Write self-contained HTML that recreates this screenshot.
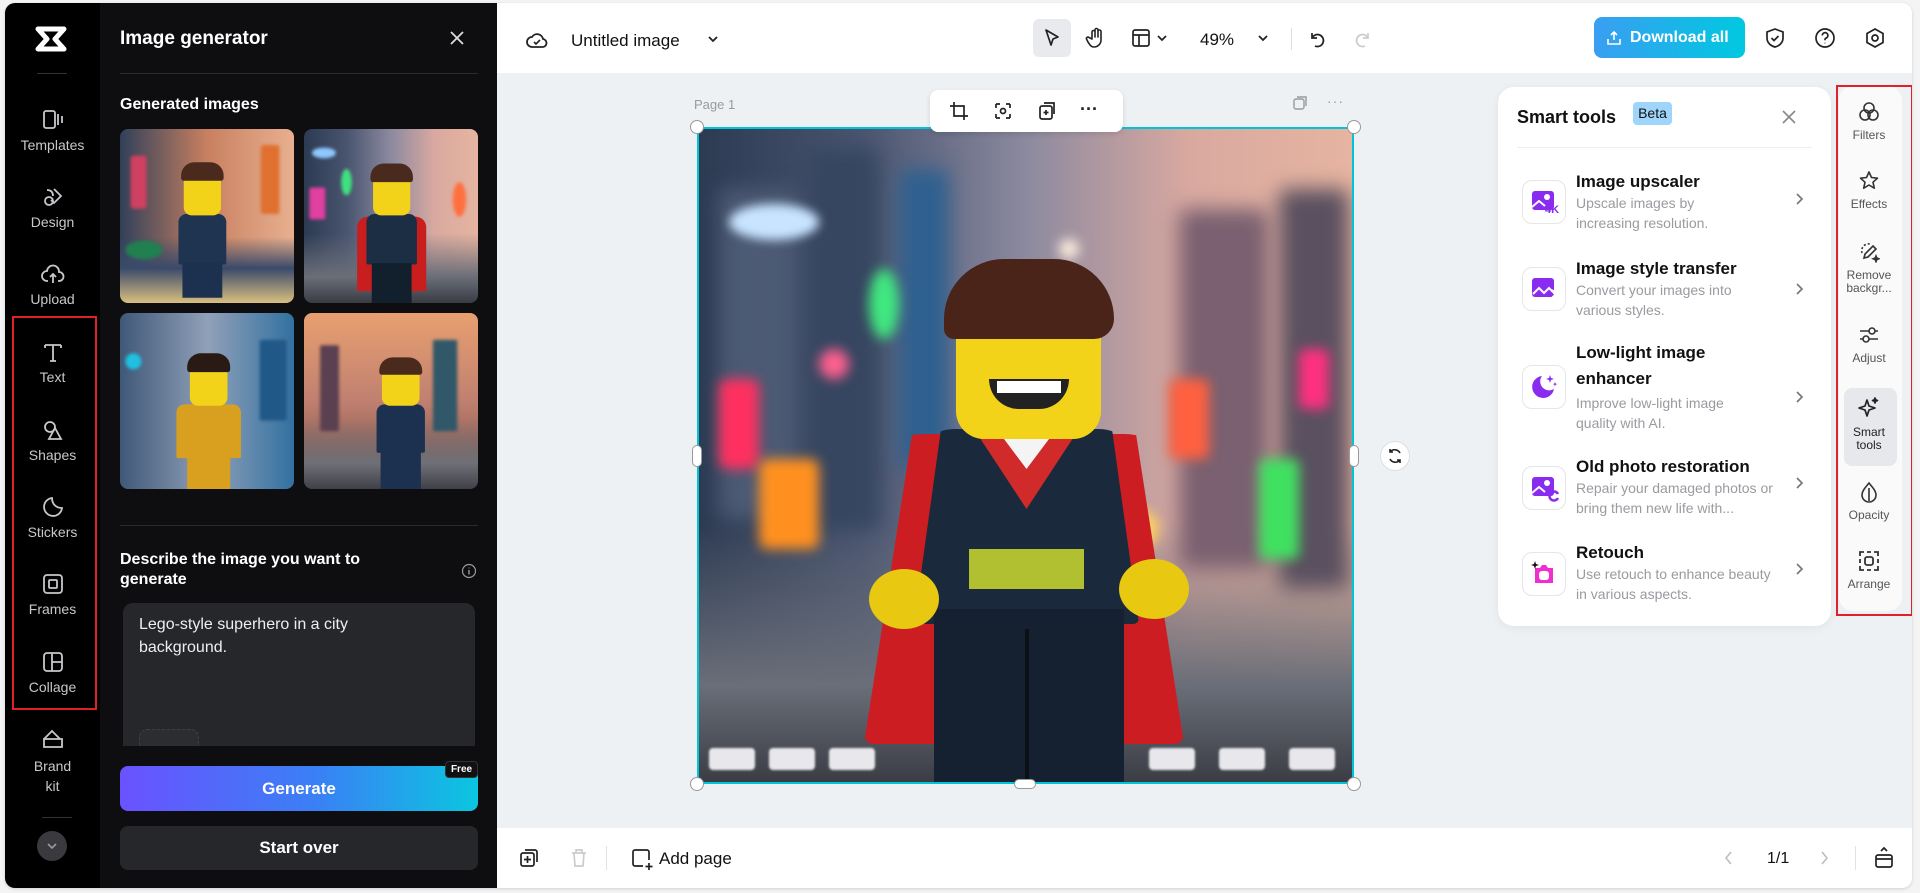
<!DOCTYPE html>
<html><head><meta charset="utf-8">
<style>
*{box-sizing:border-box;margin:0;padding:0}
body{width:1920px;height:893px;overflow:hidden;background:#f4f4f5;font-family:"Liberation Sans",sans-serif;position:relative}
.app{position:absolute;left:5px;top:3px;width:1907px;height:885px;background:#fff;border-radius:10px;overflow:hidden;box-shadow:0 1px 3px rgba(0,0,0,.15)}
.abs{position:absolute}
.nav{position:absolute;left:0;top:0;width:95px;height:885px;background:#000}
.nv{position:absolute;left:0;width:95px;text-align:center;color:#c8c8cc;font-size:14px}
.nv svg{display:block;margin:0 auto 6px}
.panel{position:absolute;left:95px;top:0;width:397px;height:885px;background:#0e0e10;color:#fff}
.canvas{position:absolute;left:492px;top:70px;width:1415px;height:755px;background:#eef1f4}
.scene{position:absolute;left:0;top:0;width:655px;height:655px;overflow:hidden;transform-origin:0 0;
background:linear-gradient(180deg,rgba(0,0,0,0) 60%,#6a6e78 85%,#3a3c44 100%),linear-gradient(90deg,#2c3a52 0%,#4a5570 25%,#8c8aa0 50%,#d9a9a0 75%,#e6b4a0 100%)}
.b{position:absolute;border-radius:50%;filter:blur(6px)}
.fig{position:absolute;left:0;top:0;width:655px;height:655px}
.stud{position:absolute;bottom:14px;width:46px;height:22px;background:#e8e8ec;border-radius:4px;filter:blur(1px)}
.item{position:absolute;left:24px;width:300px}
.item .ib{position:absolute;left:0;width:44px;height:44px;border:1px solid #e6e6e8;border-radius:10px;background:#fff}
.item .t{position:absolute;left:54px;font-size:17px;font-weight:bold;color:#111;line-height:23px;width:220px}
.item .d{position:absolute;left:54px;font-size:14px;color:#9a9aa0;line-height:20px;width:205px}
.item .c{position:absolute;left:272px}
.rt{position:absolute;left:0;width:60px;text-align:center;font-size:12px;color:#555;line-height:13px}
.rt svg{display:block;margin:0 auto 6px}
</style></head><body>
<div class="app">
<div class="nav">
 <svg class="abs" style="left:30px;top:22px" width="34" height="28" viewBox="0 0 34 28"><path d="M3 4h26l-9 10 9 10H3l9-10z" fill="none" stroke="#fff" stroke-width="5" stroke-linejoin="round"/></svg>
 <div class="abs" style="left:32px;top:70px;width:30px;height:1px;background:#333"></div>
 <div class="nv" style="top:106px"><svg width="22" height="22" viewBox="0 0 22 22" fill="none" stroke="#c8c8cc" stroke-width="1.8"><rect x="2" y="2" width="11" height="17" rx="2"/><path d="M16 5v11M20 7v7"/></svg>Templates</div>
 <div class="nv" style="top:183px"><svg width="22" height="22" viewBox="0 0 22 22" fill="none" stroke="#c8c8cc" stroke-width="1.8"><circle cx="7" cy="15" r="4"/><path d="M12 3l7 7-7 7-3-3M5 4c4 0 6 2 6 6"/></svg>Design</div>
 <div class="nv" style="top:260px"><svg width="24" height="22" viewBox="0 0 24 22" fill="none" stroke="#c8c8cc" stroke-width="1.8"><path d="M7 18H6a5 5 0 0 1 0-10 6 6 0 0 1 12 1 4 4 0 0 1 0 9h-1M12 20v-9M9 14l3-3 3 3"/></svg>Upload</div>
 <div class="nv" style="top:338px"><svg width="22" height="22" viewBox="0 0 22 22" fill="none" stroke="#c8c8cc" stroke-width="1.8"><path d="M3 4h16M11 4v16M3 4v3M19 4v3M8 20h6"/></svg>Text</div>
 <div class="nv" style="top:416px"><svg width="22" height="22" viewBox="0 0 22 22" fill="none" stroke="#c8c8cc" stroke-width="1.8"><circle cx="8" cy="8" r="5"/><path d="M13 9l6 11H7z"/></svg>Shapes</div>
 <div class="nv" style="top:493px"><svg width="22" height="22" viewBox="0 0 22 22" fill="none" stroke="#c8c8cc" stroke-width="1.8"><path d="M20 12A9 9 0 1 1 10 2c0 6 4 10 10 10z"/></svg>Stickers</div>
 <div class="nv" style="top:570px"><svg width="22" height="22" viewBox="0 0 22 22" fill="none" stroke="#c8c8cc" stroke-width="1.8"><rect x="2" y="2" width="18" height="18" rx="3"/><rect x="7" y="7" width="8" height="8" rx="1"/></svg>Frames</div>
 <div class="nv" style="top:648px"><svg width="22" height="22" viewBox="0 0 22 22" fill="none" stroke="#c8c8cc" stroke-width="1.8"><rect x="2" y="2" width="18" height="18" rx="3"/><path d="M10 2v18M10 11h10"/></svg>Collage</div>
 <div class="nv" style="top:725px;line-height:20px"><svg width="24" height="22" viewBox="0 0 24 22" fill="none" stroke="#c8c8cc" stroke-width="1.8"><path d="M3 11h18v8H3zM3 11l8-8 8 8"/></svg>Brand<br>kit</div>
 <div class="abs" style="left:37px;top:814px;width:30px;height:1px;background:#333"></div>
 <div class="abs" style="left:32px;top:828px;width:30px;height:30px;border-radius:50%;background:#3a3a3e"><svg width="30" height="30" viewBox="0 0 30 30"><path d="M11 13l4 4 4-4" fill="none" stroke="#999" stroke-width="1.6"/></svg></div>
 <div class="abs" style="left:7px;top:313px;width:85px;height:394px;border:2px solid #e0202a"></div>
</div>
<div class="panel">
 <div class="abs" style="left:20px;top:25px;font-size:19px;font-weight:bold">Image generator</div>
 <svg class="abs" style="left:349px;top:27px" width="16" height="16" viewBox="0 0 16 16"><path d="M2 2l12 12M14 2L2 14" stroke="#ddd" stroke-width="1.8"/></svg>
 <div class="abs" style="left:20px;top:70px;width:358px;height:1px;background:#2a2a2e"></div>
 <div class="abs" style="left:20px;top:93px;font-size:16px;font-weight:bold">Generated images</div>
 <div class="abs" style="left:20px;top:126px;width:174px;height:174px;border-radius:8px;overflow:hidden"><div class="scene" style="transform:scale(.2657);background:linear-gradient(180deg,rgba(0,0,0,0) 62%,#3a4a6a 80%,#d9c080 100%),linear-gradient(90deg,#30405a,#c88060 50%,#e8b090)">
  <div class="b" style="left:40px;top:100px;width:60px;height:200px;background:#d04060;border-radius:10px"></div><div class="b" style="left:530px;top:60px;width:70px;height:260px;background:#e07030;border-radius:10px"></div><div class="b" style="left:20px;top:420px;width:140px;height:70px;background:#208050"></div>
  <div class="fig" style="left:-20px"><div class="abs" style="left:240px;top:320px;width:180px;height:190px;background:#1e3450;border-radius:30px 30px 6px 6px"></div><div class="abs" style="left:260px;top:150px;width:140px;height:175px;background:#f2d31a;border-radius:30px"></div><div class="abs" style="left:250px;top:125px;width:160px;height:70px;background:#4a2a1c;border-radius:50px 50px 10px 10px"></div><div class="abs" style="left:255px;top:505px;width:150px;height:130px;background:#1c3050"></div></div>
 </div></div>
 <div class="abs" style="left:204px;top:126px;width:174px;height:174px;border-radius:8px;overflow:hidden"><div class="scene" style="transform:scale(.2657)">
  <div class="b" style="left:30px;top:70px;width:90px;height:40px;background:#8ec8ff"></div><div class="b" style="left:20px;top:220px;width:60px;height:120px;background:#e040a0;border-radius:8px"></div><div class="b" style="left:140px;top:150px;width:40px;height:100px;background:#40e080"></div><div class="b" style="left:560px;top:200px;width:50px;height:130px;background:#ff7040"></div>
  <div class="fig"><div class="abs" style="left:200px;top:330px;width:260px;height:280px;background:#c81e1e;border-radius:40px 40px 0 0"></div><div class="abs" style="left:235px;top:320px;width:190px;height:190px;background:#1c2e44;border-radius:30px 30px 6px 6px"></div><div class="abs" style="left:260px;top:160px;width:140px;height:165px;background:#f2d31a;border-radius:30px"></div><div class="abs" style="left:250px;top:130px;width:160px;height:70px;background:#4a2a1c;border-radius:50px 50px 10px 10px"></div><div class="abs" style="left:255px;top:505px;width:150px;height:150px;background:#12202e"></div></div>
 </div></div>
 <div class="abs" style="left:20px;top:310px;width:174px;height:176px;border-radius:8px;overflow:hidden"><div class="scene" style="transform:scale(.2687);background:linear-gradient(90deg,#405878,#90a0b8 50%,#3070a0)">
  <div class="b" style="left:20px;top:150px;width:60px;height:60px;background:#20c0e0"></div><div class="b" style="left:520px;top:100px;width:100px;height:300px;background:#205888;border-radius:6px"></div>
  <div class="fig"><div class="abs" style="left:210px;top:340px;width:240px;height:200px;background:#d9a020;border-radius:30px 30px 6px 6px"></div><div class="abs" style="left:260px;top:180px;width:140px;height:165px;background:#f2d31a;border-radius:30px"></div><div class="abs" style="left:250px;top:150px;width:160px;height:70px;background:#2a1a14;border-radius:50px 50px 10px 10px"></div><div class="abs" style="left:250px;top:535px;width:160px;height:120px;background:#d9a020"></div></div>
 </div></div>
 <div class="abs" style="left:204px;top:310px;width:174px;height:176px;border-radius:8px;overflow:hidden"><div class="scene" style="transform:scale(.2687);background:linear-gradient(180deg,rgba(0,0,0,0) 60%,#707078 85%,#404048 100%),linear-gradient(180deg,#e8a070,#c08070 50%,#704840)">
  <div class="b" style="left:60px;top:120px;width:70px;height:320px;background:#5a4050;border-radius:6px"></div><div class="b" style="left:480px;top:100px;width:90px;height:340px;background:#305868;border-radius:6px"></div>
  <div class="fig" style="left:30px"><div class="abs" style="left:240px;top:340px;width:180px;height:180px;background:#1c3050;border-radius:30px 30px 6px 6px"></div><div class="abs" style="left:260px;top:190px;width:140px;height:155px;background:#f2d31a;border-radius:30px"></div><div class="abs" style="left:250px;top:165px;width:160px;height:65px;background:#4a2a1c;border-radius:50px 50px 10px 10px"></div><div class="abs" style="left:255px;top:515px;width:150px;height:140px;background:#1c3050"></div></div>
 </div></div>
 <div class="abs" style="left:20px;top:522px;width:358px;height:1px;background:#2a2a2e"></div>
 <div class="abs" style="left:20px;top:547px;font-size:16px;font-weight:bold;line-height:20px;width:300px">Describe the image you want to generate</div>
 <svg class="abs" style="left:361px;top:560px" width="16" height="16" viewBox="0 0 16 16"><circle cx="8" cy="8" r="6.5" fill="none" stroke="#999" stroke-width="1.2"/><path d="M8 7v4.5M8 4.6v.8" stroke="#999" stroke-width="1.4"/></svg>
 <div class="abs" style="left:23px;top:600px;width:352px;height:143px;background:#26272b;border-radius:10px 10px 0 0"></div>
 <div class="abs" style="left:39px;top:610px;font-size:16px;color:#eee;line-height:23px;width:300px">Lego-style superhero in a city background.</div>
 <div class="abs" style="left:39px;top:726px;width:60px;height:17px;border:1px dashed #3e3f44;border-bottom:none;border-radius:8px 8px 0 0;background:#2c2d31"></div>
 <div class="abs" style="left:20px;top:763px;width:358px;height:45px;border-radius:8px;background:linear-gradient(90deg,#6a52ff,#3a80f5 55%,#0bc6e0);font-size:17px;font-weight:bold;text-align:center;line-height:45px">Generate</div>
 <div class="abs" style="left:345px;top:758px;width:33px;height:17px;background:#111;border:1px solid #333;border-radius:4px;font-size:10px;font-weight:bold;text-align:center;line-height:15px">Free</div>
 <div class="abs" style="left:20px;top:823px;width:358px;height:44px;border-radius:8px;background:#26272b;font-size:17px;font-weight:bold;text-align:center;line-height:44px">Start over</div>
</div>
<div class="abs" style="left:492px;top:415px;width:10px;height:62px;background:#2a2a2e;border-radius:0 6px 6px 0"></div>
<svg class="abs" style="left:520px;top:27px" width="24" height="22" viewBox="0 0 24 22"><path d="M7 17a5 5 0 0 1 0-10 6 6 0 0 1 11 2 4 4 0 0 1-1 8z" fill="none" stroke="#222" stroke-width="1.8"/><path d="M9 12l2 2 4-4" fill="none" stroke="#222" stroke-width="1.6"/></svg>
<div class="abs" style="left:566px;top:28px;font-size:17px;color:#111">Untitled image</div>
<svg class="abs" style="left:701px;top:29px" width="14" height="14" viewBox="0 0 14 14"><path d="M3 5l4 4 4-4" fill="none" stroke="#222" stroke-width="1.8"/></svg>
<div class="abs" style="left:1028px;top:16px;width:38px;height:38px;border-radius:6px;background:#e8eaee"></div>
<svg class="abs" style="left:1037px;top:25px" width="20" height="20" viewBox="0 0 20 20"><path d="M4 2l12 7-5 2-2 6z" fill="none" stroke="#222" stroke-width="1.7" stroke-linejoin="round"/></svg>
<svg class="abs" style="left:1080px;top:24px" width="22" height="22" viewBox="0 0 22 22"><path d="M7 12V5a1.5 1.5 0 0 1 3 0v5V3a1.5 1.5 0 0 1 3 0v7V4.5a1.5 1.5 0 0 1 3 0V13a7 7 0 0 1-7 7c-3 0-4-2-6-5l-1.5-3a1.5 1.5 0 0 1 2.5-1.5z" fill="none" stroke="#222" stroke-width="1.6" stroke-linejoin="round"/></svg>
<svg class="abs" style="left:1126px;top:25px" width="40" height="20" viewBox="0 0 40 20"><rect x="2" y="2" width="16" height="16" rx="2" fill="none" stroke="#222" stroke-width="1.7"/><path d="M2 7h16M8 7v11M27 8l4 4 4-4" fill="none" stroke="#222" stroke-width="1.7"/></svg>
<div class="abs" style="left:1195px;top:27px;font-size:17px;color:#111">49%</div>
<svg class="abs" style="left:1251px;top:28px" width="14" height="14" viewBox="0 0 14 14"><path d="M3 5l4 4 4-4" fill="none" stroke="#222" stroke-width="1.8"/></svg>
<div class="abs" style="left:1286px;top:25px;width:1px;height:22px;background:#ddd"></div>
<svg class="abs" style="left:1302px;top:26px" width="20" height="20" viewBox="0 0 20 20"><path d="M5 4v5h5M5 9a6 6 0 1 1 3 8" fill="none" stroke="#222" stroke-width="1.7"/></svg>
<svg class="abs" style="left:1348px;top:26px" width="20" height="20" viewBox="0 0 20 20"><path d="M15 4v5h-5M15 9a6 6 0 1 0-3 8" fill="none" stroke="#ccc" stroke-width="1.7"/></svg>
<div class="abs" style="left:1589px;top:14px;width:151px;height:41px;border-radius:8px;background:linear-gradient(90deg,#3a9ef2,#00c8e0);color:#fff;font-size:16px;font-weight:bold;line-height:41px;padding-left:36px">Download all</div>
<svg class="abs" style="left:1601px;top:27px" width="16" height="16" viewBox="0 0 16 16"><path d="M8 10V2M5 5l3-3 3 3M2 9v5h12V9" fill="none" stroke="#fff" stroke-width="1.6"/></svg>
<svg class="abs" style="left:1759px;top:24px" width="22" height="22" viewBox="0 0 22 22"><path d="M11 2l8 3v6c0 5-4 8-8 9-4-1-8-4-8-9V5z" fill="none" stroke="#222" stroke-width="1.7"/><path d="M7.5 11l2.5 2.5 4.5-4.5" fill="none" stroke="#222" stroke-width="1.7"/></svg>
<svg class="abs" style="left:1809px;top:24px" width="22" height="22" viewBox="0 0 22 22"><circle cx="11" cy="11" r="9" fill="none" stroke="#222" stroke-width="1.7"/><path d="M8.3 8.5a2.8 2.8 0 1 1 3.7 2.6c-.7.3-1 .8-1 1.5v.6M11 15.8v.4" fill="none" stroke="#222" stroke-width="1.7"/></svg>
<svg class="abs" style="left:1859px;top:24px" width="22" height="22" viewBox="0 0 22 22"><path d="M11 2l8 4.5v9L11 20l-8-4.5v-9z" fill="none" stroke="#222" stroke-width="1.7"/><circle cx="11" cy="11" r="3" fill="none" stroke="#222" stroke-width="1.7"/></svg>
<div class="canvas">
 <div class="abs" style="left:197px;top:24px;font-size:13px;color:#999">Page 1</div>
 <svg class="abs" style="left:795px;top:22px" width="16" height="16" viewBox="0 0 16 16"><rect x="2" y="4" width="10" height="10" rx="2" fill="none" stroke="#999" stroke-width="1.4"/><path d="M5 2h9v9" fill="none" stroke="#999" stroke-width="1.4"/></svg>
 <div class="abs" style="left:830px;top:20px;font-size:14px;color:#999;letter-spacing:1px">···</div>
 <div class="abs" style="left:200px;top:54px;width:657px;height:657px;border:2px solid #00c4d8"></div>
 <div class="abs" style="left:202px;top:56px;width:653px;height:653px;overflow:hidden">
  <div class="scene">
   <div class="b" style="left:20px;top:60px;width:80px;height:330px;background:#4c5a74;border-radius:8px;filter:blur(10px)"></div>
   <div class="b" style="left:110px;top:20px;width:70px;height:380px;background:#364660;border-radius:8px;filter:blur(10px)"></div>
   <div class="b" style="left:200px;top:40px;width:50px;height:300px;background:#2e6090;border-radius:8px;filter:blur(10px)"></div>
   <div class="b" style="left:30px;top:75px;width:90px;height:36px;background:#c8e4ff;filter:blur(5px)"></div>
   <div class="b" style="left:20px;top:250px;width:40px;height:90px;background:#ff3060;border-radius:8px"></div>
   <div class="b" style="left:60px;top:330px;width:60px;height:90px;background:#ff9020;border-radius:8px"></div>
   <div class="b" style="left:170px;top:140px;width:30px;height:70px;background:#40e880"></div>
   <div class="b" style="left:120px;top:220px;width:30px;height:30px;background:#ff6090"></div>
   <div class="b" style="left:480px;top:80px;width:90px;height:360px;background:#7a6070;border-radius:8px;filter:blur(10px)"></div>
   <div class="b" style="left:580px;top:60px;width:70px;height:400px;background:#5a5060;border-radius:8px;filter:blur(10px)"></div>
   <div class="b" style="left:470px;top:250px;width:40px;height:80px;background:#ff6040;border-radius:6px"></div>
   <div class="b" style="left:560px;top:330px;width:40px;height:100px;background:#40e060;border-radius:6px"></div>
   <div class="b" style="left:600px;top:220px;width:30px;height:60px;background:#ff3080;border-radius:6px"></div>
   <div class="b" style="left:420px;top:380px;width:40px;height:40px;background:#ffd060"></div>
   <div class="b" style="left:360px;top:110px;width:20px;height:20px;background:#fff0e0"></div>
   <div class="stud" style="left:10px"></div><div class="stud" style="left:70px"></div><div class="stud" style="left:130px"></div><div class="stud" style="left:450px"></div><div class="stud" style="left:520px"></div><div class="stud" style="left:590px"></div>
   <div class="fig">
    <div class="abs" style="left:165px;top:305px;width:320px;height:310px;background:#cc1e22;border-radius:60px 60px 10px 10px;clip-path:polygon(15% 0,85% 0,100% 100%,70% 100%,30% 100%,0 100%)"></div>
    <div class="abs" style="left:215px;top:300px;width:225px;height:195px;background:#1a2a3c;border-radius:40px 40px 6px 6px;clip-path:polygon(12% 0,88% 0,100% 100%,0 100%)"></div>
    <div class="abs" style="left:275px;top:300px;width:105px;height:80px;background:#d02a2a;clip-path:polygon(0 0,100% 0,50% 100%)"></div>
    <div class="abs" style="left:305px;top:310px;width:45px;height:30px;background:#f4f4f4;clip-path:polygon(0 0,100% 0,50% 100%)"></div>
    <div class="abs" style="left:270px;top:420px;width:115px;height:40px;background:#b0c030"></div>
    <div class="abs" style="left:235px;top:480px;width:190px;height:175px;background:#152030"></div>
    <div class="abs" style="left:326px;top:500px;width:4px;height:155px;background:#0a1018"></div>
    <div class="abs" style="left:170px;top:440px;width:70px;height:60px;background:#e8c810;border-radius:50%"></div>
    <div class="abs" style="left:420px;top:430px;width:70px;height:60px;background:#e8c810;border-radius:50%"></div>
    <div class="abs" style="left:257px;top:165px;width:145px;height:145px;background:#f2d31a;border-radius:28px"></div>
    <div class="abs" style="left:245px;top:130px;width:170px;height:80px;background:#4a2418;border-radius:60px 60px 20px 10px"></div>
    <div class="abs" style="left:290px;top:250px;width:80px;height:30px;background:#222;border-radius:0 0 40px 40px"></div>
    <div class="abs" style="left:298px;top:252px;width:64px;height:12px;background:#fff"></div>
   </div>
  </div>
 </div>
 <div class="abs" style="left:193px;top:47px;width:14px;height:14px;border-radius:50%;background:#fff;border:1px solid #999"></div>
 <div class="abs" style="left:850px;top:47px;width:14px;height:14px;border-radius:50%;background:#fff;border:1px solid #999"></div>
 <div class="abs" style="left:193px;top:704px;width:14px;height:14px;border-radius:50%;background:#fff;border:1px solid #999"></div>
 <div class="abs" style="left:850px;top:704px;width:14px;height:14px;border-radius:50%;background:#fff;border:1px solid #999"></div>
 <div class="abs" style="left:195px;top:372px;width:10px;height:22px;border-radius:5px;background:#fff;border:1px solid #999"></div>
 <div class="abs" style="left:852px;top:372px;width:10px;height:22px;border-radius:5px;background:#fff;border:1px solid #999"></div>
 <div class="abs" style="left:517px;top:706px;width:22px;height:10px;border-radius:5px;background:#fff;border:1px solid #999"></div>
 <div class="abs" style="left:883px;top:368px;width:30px;height:30px;border-radius:50%;background:#fff;border:1px solid #ddd"><svg width="28" height="28" viewBox="0 0 28 28"><path d="M19 11a6 6 0 0 0-10-1M9 17a6 6 0 0 0 10 1M9 7v3h3M19 21v-3h-3" fill="none" stroke="#222" stroke-width="1.6"/></svg></div>
 <div class="abs" style="left:433px;top:17px;width:193px;height:42px;background:#fff;border-radius:8px;box-shadow:0 2px 6px rgba(0,0,0,.12)">
  <svg class="abs" style="left:19px;top:11px" width="20" height="20" viewBox="0 0 20 20"><path d="M5 1v14h14M1 5h14v14" fill="none" stroke="#222" stroke-width="1.7"/></svg>
  <svg class="abs" style="left:63px;top:11px" width="20" height="20" viewBox="0 0 20 20"><path d="M3 3h4M3 3v4M17 3h-4M17 3v4M3 17h4M3 17v-4M17 17h-4M17 17v-4" fill="none" stroke="#222" stroke-width="1.7"/><circle cx="10" cy="10" r="2.5" fill="none" stroke="#222" stroke-width="1.7"/></svg>
  <svg class="abs" style="left:108px;top:11px" width="20" height="20" viewBox="0 0 20 20"><rect x="2" y="5" width="12" height="13" rx="2" fill="none" stroke="#222" stroke-width="1.7"/><path d="M6 2h10v11M8 9v5M5.5 11.5h5" fill="none" stroke="#222" stroke-width="1.7"/></svg>
  <div class="abs" style="left:150px;top:9px;font-size:18px;font-weight:bold;color:#222">···</div>
 </div>
 <div class="abs" style="left:1001px;top:14px;width:333px;height:539px;background:#fff;border-radius:16px;box-shadow:0 2px 10px rgba(0,0,0,.06)">
  <div class="abs" style="left:19px;top:20px;font-size:18px;font-weight:bold;color:#111">Smart tools</div>
  <div class="abs" style="left:135px;top:15px;width:39px;height:23px;background:#9fd5fb;border-radius:4px;font-size:14px;text-align:center;line-height:23px;color:#111">Beta</div>
  <svg class="abs" style="left:283px;top:22px" width="16" height="16" viewBox="0 0 16 16"><path d="M2 2l12 12M14 2L2 14" stroke="#888" stroke-width="1.6"/></svg>
  <div class="abs" style="left:19px;top:60px;width:295px;height:1px;background:#eee"></div>
  <div class="item" style="top:81px"><div class="ib" style="top:12px"><svg width="42" height="42" viewBox="0 0 42 42"><rect x="9" y="10" width="22" height="19" rx="3" fill="#8a2cf0"/><circle cx="24" cy="16" r="3" fill="#fff"/><path d="M9 26l7-6 6 5" fill="none" stroke="#fff" stroke-width="2"/><text x="22" y="32" font-size="11" font-weight="bold" fill="#8a2cf0" font-family="Liberation Sans">4K</text></svg></div><div class="t" style="top:2px">Image upscaler</div><div class="d" style="top:25px;width:160px">Upscale images by increasing resolution.</div><svg class="c" style="top:24px" width="12" height="14" viewBox="0 0 12 14"><path d="M3 2l5 5-5 5" fill="none" stroke="#777" stroke-width="1.7"/></svg></div>
  <div class="item" style="top:166px"><div class="ib" style="top:14px"><svg width="42" height="42" viewBox="0 0 42 42"><rect x="9" y="10" width="22" height="19" rx="3" fill="#8a2cf0"/><path d="M10 26l6-6 5 5 5-5 7 7M29 22l4 4-4 4" fill="none" stroke="#fff" stroke-width="2"/></svg></div><div class="t" style="top:4px">Image style transfer</div><div class="d" style="top:27px;width:190px">Convert your images into various styles.</div><svg class="c" style="top:29px" width="12" height="14" viewBox="0 0 12 14"><path d="M3 2l5 5-5 5" fill="none" stroke="#777" stroke-width="1.7"/></svg></div>
  <div class="item" style="top:252px"><div class="ib" style="top:26px"><svg width="42" height="42" viewBox="0 0 42 42"><path d="M19 10a11 11 0 1 0 12 13 9 9 0 0 1-12-13z" fill="#8a2cf0"/><path d="M27 9l1 3 3 1-3 1-1 3-1-3-3-1 3-1z M32 16l.6 1.5 1.5.6-1.5.6-.6 1.5-.6-1.5-1.5-.6 1.5-.6z" fill="#8a2cf0"/></svg></div><div class="t" style="top:1px;line-height:26px;width:170px">Low-light image enhancer</div><div class="d" style="top:54px;width:190px">Improve low-light image quality with AI.</div><svg class="c" style="top:51px" width="12" height="14" viewBox="0 0 12 14"><path d="M3 2l5 5-5 5" fill="none" stroke="#777" stroke-width="1.7"/></svg></div>
  <div class="item" style="top:368px"><div class="ib" style="top:11px"><svg width="42" height="42" viewBox="0 0 42 42"><rect x="9" y="10" width="22" height="19" rx="3" fill="#8a2cf0"/><circle cx="24" cy="16" r="3" fill="#fff"/><path d="M9 26l7-6 6 5" fill="none" stroke="#fff" stroke-width="2"/><path d="M35 27a4.5 4.5 0 1 0 0 4" fill="none" stroke="#8a2cf0" stroke-width="2.5"/></svg></div><div class="t" style="top:0px">Old photo restoration</div><div class="d" style="top:23px;width:215px">Repair your damaged photos or bring them new life with...</div><svg class="c" style="top:21px" width="12" height="14" viewBox="0 0 12 14"><path d="M3 2l5 5-5 5" fill="none" stroke="#777" stroke-width="1.7"/></svg></div>
  <div class="item" style="top:454px"><div class="ib" style="top:11px"><svg width="42" height="42" viewBox="0 0 42 42"><path d="M12 15h5l2-3h4l2 3h5v15H12z" fill="#f02ed0"/><rect x="16" y="18" width="10" height="9" rx="3" fill="#fff"/><path d="M12 8l1 3 3 1-3 1-1 3-1-3-3-1 3-1z" fill="#111"/></svg></div><div class="t" style="top:0px">Retouch</div><div class="d" style="top:23px;width:205px">Use retouch to enhance beauty in various aspects.</div><svg class="c" style="top:21px" width="12" height="14" viewBox="0 0 12 14"><path d="M3 2l5 5-5 5" fill="none" stroke="#777" stroke-width="1.7"/></svg></div>
 </div>
 <div class="abs" style="left:1342px;top:13px;width:63px;height:525px;background:#fafafb;border-radius:14px">
  <div class="rt" style="top:15px"><svg width="22" height="22" viewBox="0 0 22 22" fill="none" stroke="#333" stroke-width="1.6"><circle cx="11" cy="7" r="5"/><circle cx="7" cy="14" r="5"/><circle cx="15" cy="14" r="5"/></svg>Filters</div>
  <div class="rt" style="top:84px"><svg width="22" height="22" viewBox="0 0 22 22" fill="none" stroke="#333" stroke-width="1.6" stroke-linejoin="round"><path d="M11 2l2.5 5.5 6 .7-4.5 4 1.3 6L11 15l-5.3 3.2 1.3-6-4.5-4 6-.7z"/></svg>Effects</div>
  <div class="rt" style="top:155px"><svg width="22" height="22" viewBox="0 0 22 22" fill="none" stroke="#333" stroke-width="1.6"><path d="M4 12a7 7 0 0 1 8-9" stroke-dasharray="2 2"/><path d="M15 5l3 3-8 8-4 1 1-4z"/><path d="M18 15l.8 2 2 .8-2 .8-.8 2-.8-2-2-.8 2-.8z" fill="#333"/></svg>Remove<br>backgr...</div>
  <div class="rt" style="top:238px"><svg width="22" height="22" viewBox="0 0 22 22" fill="none" stroke="#333" stroke-width="1.6"><path d="M2 7h9M17 7h3M2 15h3M11 15h9"/><circle cx="14" cy="7" r="3"/><circle cx="8" cy="15" r="3"/></svg>Adjust</div>
  <div class="abs" style="left:5px;top:302px;width:53px;height:78px;background:#e6e8ec;border-radius:8px"></div>
  <div class="rt" style="top:310px;color:#222"><svg width="24" height="24" viewBox="0 0 24 24" fill="none" stroke="#222" stroke-width="1.7" stroke-linejoin="round"><path d="M10 4l2 6 6 2-6 2-2 6-2-6-6-2 6-2z"/><path d="M18 2l.7 1.8 1.8.7-1.8.7L18 7l-.7-1.8-1.8-.7 1.8-.7z" fill="#222"/></svg>Smart<br>tools</div>
  <div class="rt" style="top:395px"><svg width="22" height="22" viewBox="0 0 22 22" fill="none" stroke="#333" stroke-width="1.6"><path d="M11 2c4 5 7 8 7 12a7 7 0 0 1-14 0c0-4 3-7 7-12z"/><path d="M11 7v13" /></svg>Opacity</div>
  <div class="rt" style="top:464px"><svg width="22" height="22" viewBox="0 0 22 22" fill="none" stroke="#333" stroke-width="1.8"><path d="M2 6V2h4M16 2h4v4M20 16v4h-4M6 20H2v-4M9 2h4M9 20h4M2 9v4M20 9v4"/><rect x="7" y="7" width="8" height="8" rx="2"/></svg>Arrange</div>
 </div>
 <div class="abs" style="left:1339px;top:12px;width:77px;height:531px;border:2px solid #e0202a"></div>
</div>
<svg class="abs" style="left:513px;top:844px" width="22" height="22" viewBox="0 0 22 22" fill="none" stroke="#222" stroke-width="1.7"><rect x="3" y="6" width="13" height="13" rx="2"/><path d="M7 3h10a2 2 0 0 1 2 2v10M9.5 9v7M6 12.5h7"/></svg>
<svg class="abs" style="left:563px;top:844px" width="22" height="22" viewBox="0 0 22 22" fill="none" stroke="#ccc" stroke-width="1.7"><path d="M4 6h14M8 6V3h6v3M6 6l1 13h8l1-13"/></svg>
<div class="abs" style="left:601px;top:843px;width:1px;height:24px;background:#e2e2e2"></div>
<svg class="abs" style="left:625px;top:844px" width="24" height="24" viewBox="0 0 24 24" fill="none" stroke="#222" stroke-width="1.7"><path d="M13 19H5a2 2 0 0 1-2-2V5a2 2 0 0 1 2-2h12a2 2 0 0 1 2 2v8M19 16v7M15.5 19.5h7"/></svg>
<div class="abs" style="left:654px;top:846px;font-size:17px;color:#111">Add page</div>
<svg class="abs" style="left:1716px;top:846px" width="16" height="18" viewBox="0 0 16 18"><path d="M10 3l-5 6 5 6" fill="none" stroke="#bbb" stroke-width="1.5"/></svg>
<div class="abs" style="left:1762px;top:847px;font-size:16px;color:#111">1/1</div>
<svg class="abs" style="left:1811px;top:846px" width="16" height="18" viewBox="0 0 16 18"><path d="M6 3l5 6-5 6" fill="none" stroke="#bbb" stroke-width="1.5"/></svg>
<div class="abs" style="left:1850px;top:843px;width:1px;height:24px;background:#e2e2e2"></div>
<svg class="abs" style="left:1868px;top:843px" width="22" height="24" viewBox="0 0 22 24" fill="none" stroke="#222" stroke-width="1.7"><rect x="3" y="9" width="16" height="12" rx="2"/><path d="M3 13h16M8 5l3-3 3 3"/></svg>
</div>
</body></html>
